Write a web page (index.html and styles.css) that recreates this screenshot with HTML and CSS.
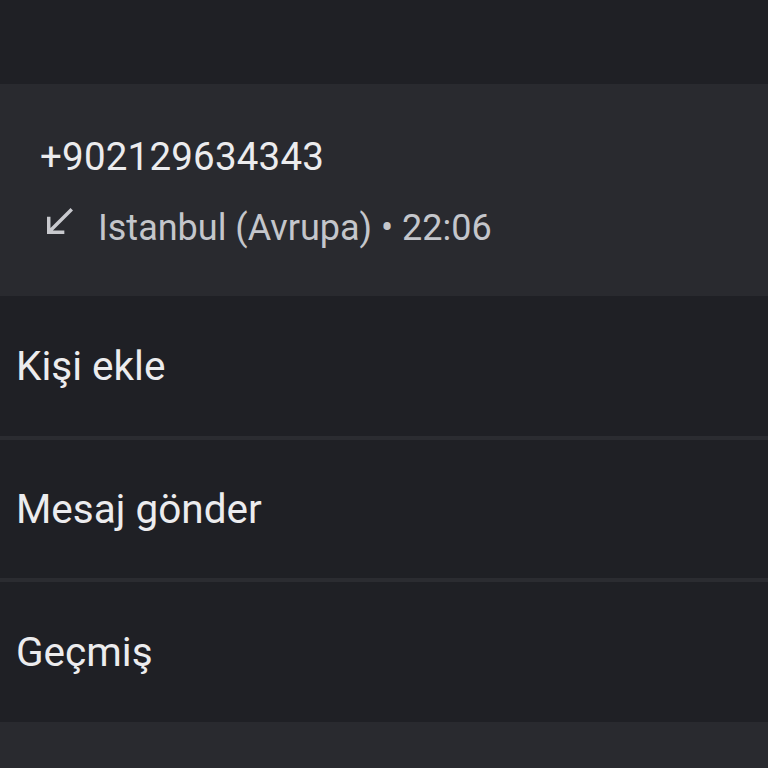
FILE: index.html
```html
<!DOCTYPE html>
<html lang="tr">
<head>
<meta charset="utf-8">
<link rel="stylesheet" href="styles.css">
</head>
<body>
<div class="screen">
  <div class="topbar"></div>
  <section class="call-card">
    <div class="number">+902129634343</div>
    <div class="meta">
      <svg class="arrow" viewBox="5 4 15 15" width="26" height="26"><path d="M20 5.41L18.59 4 7 15.59V9H5v10h10v-2H8.41z" fill="currentColor"/></svg>
      <span>Istanbul (Avrupa) • 22:06</span>
    </div>
  </section>
  <ul class="actions">
    <li class="action">Kişi ekle</li>
    <li class="action">Mesaj gönder</li>
    <li class="action">Geçmiş</li>
  </ul>
  <div class="bottom"></div>
</div>
</body>
</html>
```
FILE: styles.css
```css
html, body {
  margin: 0;
  padding: 0;
  background: #1f2025;
}
.screen {
  width: 768px;
  height: 768px;
  overflow: hidden;
  display: flex;
  flex-direction: column;
  font-family: Roboto, "Noto Sans", sans-serif;
  background: #1f2025;
}
.topbar {
  height: 84px;
  flex: none;
  background: #1f2025;
}
.call-card {
  height: 212px;
  flex: none;
  box-sizing: border-box;
  background: #292a2f;
  padding: 48px 0 0 40px;
}
.number {
  font-size: 38.5px;
  line-height: 50px;
  color: #ececee;
  letter-spacing: 0.2px;
}
.meta {
  display: flex;
  align-items: center;
  margin-top: 24px;
  color: #c4c6cb;
  font-size: 36px;
  line-height: 44px;
}
.arrow {
  margin: 0 25px 14px 7px;
  color: #c8c9ce;
  flex: none;
}
.actions {
  list-style: none;
  margin: 0;
  padding: 0;
  display: flex;
  flex-direction: column;
}
.action {
  height: 140px;
  box-sizing: border-box;
  display: flex;
  align-items: center;
  padding-left: 16px;
  font-size: 40.5px;
  color: #ececee;
  background: #1f2025;
}
.action + .action {
  border-top: 4px solid #2b2c31;
  height: 142px;
}
.action:last-child {
  height: 144px;
}
.bottom {
  flex: 1;
  background: #292a2f;
}
```
